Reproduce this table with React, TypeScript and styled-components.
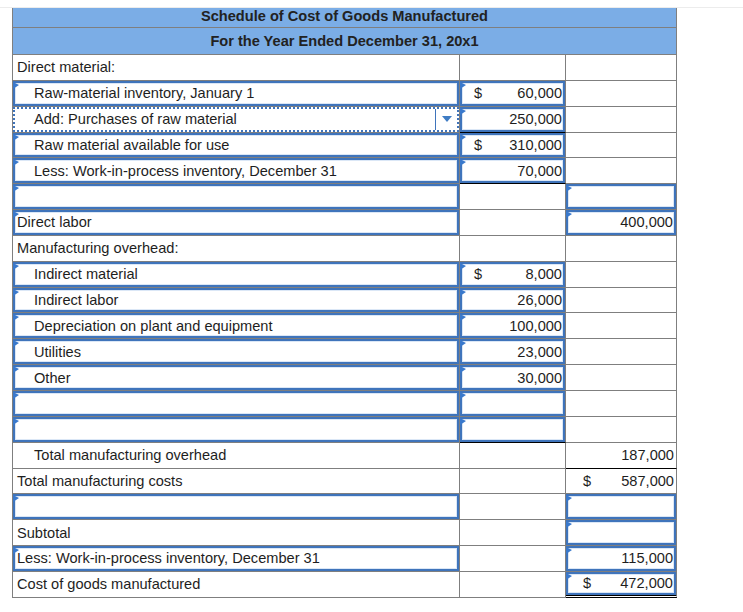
import React from "react";
import styled, { createGlobalStyle, css } from "styled-components";

const GRAY = "#7f7f7f";
const BLUE = "#3f74bb";
const HEADER_BG = "#7badE6";

const GlobalStyle = createGlobalStyle`
  body {
    margin: 0;
    background: #ffffff;
    font-family: "Liberation Sans", Arial, sans-serif;
    color: #1e1e1e;
  }
`;

const Page = styled.div`
  padding-top: 7px;
  width: 743px;
  height: 612px;
  box-sizing: border-box;
`;

const TopRule = styled.div`
  height: 1px;
  background: #ececec;
`;

const Sheet = styled.div`
  display: grid;
  grid-template-columns: 447px 106px 111px;
  grid-template-rows: 20px 27px;
  grid-auto-rows: 25.85px;
  width: max-content;
  margin-left: 12px;
  border-left: 1px solid ${GRAY};
  font-size: 14.6px;
`;

const HeaderCell = styled.div<{ $first?: boolean }>`
  grid-column: 1 / -1;
  background: ${HEADER_BG};
  border-right: 1px solid ${GRAY};
  border-bottom: 1px solid ${GRAY};
  display: flex;
  align-items: center;
  justify-content: center;
  font-weight: bold;
  color: #222;
  padding-bottom: ${(p) => (p.$first ? "4px" : "0")};
`;

type Under = "single" | "double";

const Cell = styled.div<{ $under?: Under }>`
  position: relative;
  display: flex;
  border-right: 1px solid ${GRAY};
  border-bottom: 1px solid ${GRAY};
  ${(p) =>
    p.$under === "single" &&
    css`
      border-bottom-color: #000;
    `}
  ${(p) =>
    p.$under === "double" &&
    css`
      border-bottom: 3px double #000;
    `}
`;

type Kind = "plain" | "input" | "select";

const Field = styled.div<{ $kind: Kind; $pl: number; $pr?: number }>`
  position: relative;
  flex: 1;
  display: flex;
  align-items: center;
  min-width: 0;
  white-space: nowrap;
  padding-left: ${(p) => p.$pl}px;
  padding-right: ${(p) => p.$pr ?? 0}px;
  ${(p) =>
    p.$kind === "input" &&
    css`
      border: 2px solid ${BLUE};
      box-shadow: inset 0 0 0 1px #dbe7f6;
      &::before {
        content: "";
        position: absolute;
        left: -2px;
        top: -1px;
        border-left: 6px solid #3a79cc;
        border-top: 3px solid transparent;
        border-bottom: 4px solid transparent;
      }
    `}
  ${(p) =>
    p.$kind === "select" &&
    css`
      border: 2px dotted ${BLUE};
    `}
`;

const Label = styled.span`
  flex: 1;
`;

const Dollar = styled.span`
  flex: 1;
`;

const Value = styled.span`
  margin-left: auto;
`;

const SelectButton = styled.div`
  align-self: stretch;
  width: 22px;
  border-left: 1px solid ${BLUE};
  display: flex;
  align-items: center;
  justify-content: center;
  margin-right: -1px;
`;

const Caret = styled.span`
  width: 0;
  height: 0;
  border-left: 5px solid transparent;
  border-right: 5px solid transparent;
  border-top: 6px solid #3f7cc4;
`;

type Amt = {
  kind?: Kind;
  dollar?: boolean;
  value?: string;
  under?: Under;
};

type Row = {
  label?: string;
  indent?: boolean;
  kind?: Kind;
  c2?: Amt;
  c3?: Amt;
};

const rows: Row[] = [
  { label: "Direct material:" },
  {
    label: "Raw-material inventory, January 1",
    indent: true,
    kind: "input",
    c2: { kind: "input", dollar: true, value: "60,000" },
  },
  {
    label: "Add: Purchases of raw material",
    indent: true,
    kind: "select",
    c2: { kind: "input", value: "250,000", under: "single" },
  },
  {
    label: "Raw material available for use",
    indent: true,
    kind: "input",
    c2: { kind: "input", dollar: true, value: "310,000" },
  },
  {
    label: "Less: Work-in-process inventory, December 31",
    indent: true,
    kind: "input",
    c2: { kind: "input", value: "70,000", under: "single" },
  },
  { kind: "input", c3: { kind: "input" } },
  { label: "Direct labor", kind: "input", c3: { kind: "input", value: "400,000" } },
  { label: "Manufacturing overhead:" },
  {
    label: "Indirect material",
    indent: true,
    kind: "input",
    c2: { kind: "input", dollar: true, value: "8,000" },
  },
  { label: "Indirect labor", indent: true, kind: "input", c2: { kind: "input", value: "26,000" } },
  {
    label: "Depreciation on plant and equipment",
    indent: true,
    kind: "input",
    c2: { kind: "input", value: "100,000" },
  },
  { label: "Utilities", indent: true, kind: "input", c2: { kind: "input", value: "23,000" } },
  { label: "Other", indent: true, kind: "input", c2: { kind: "input", value: "30,000" } },
  { kind: "input", c2: { kind: "input" } },
  { kind: "input", c2: { kind: "input", under: "single" } },
  {
    label: "Total manufacturing overhead",
    indent: true,
    c3: { value: "187,000", under: "single" },
  },
  { label: "Total manufacturing costs", c3: { dollar: true, value: "587,000" } },
  { kind: "input", c3: { kind: "input" } },
  { label: "Subtotal", c3: { kind: "input" } },
  {
    label: "Less: Work-in-process inventory, December 31",
    kind: "input",
    c3: { kind: "input", value: "115,000" },
  },
  {
    label: "Cost of goods manufactured",
    c3: { kind: "input", dollar: true, value: "472,000", under: "double" },
  },
];

function LabelCell({ row }: { row: Row }) {
  const kind = row.kind ?? "plain";
  const boxed = kind !== "plain";
  const pl = (row.indent ? 21 : 4) - (boxed ? 2 : 0);
  return (
    <Cell>
      <Field $kind={kind} $pl={pl}>
        <Label>{row.label}</Label>
        {kind === "select" && (
          <SelectButton>
            <Caret />
          </SelectButton>
        )}
      </Field>
    </Cell>
  );
}

function AmountCell({ amt, left }: { amt?: Amt; left: number }) {
  const kind = amt?.kind ?? "plain";
  const boxed = kind !== "plain";
  return (
    <Cell $under={amt?.under}>
      <Field $kind={kind} $pl={left - (boxed ? 2 : 0)} $pr={boxed ? 1 : 2}>
        {amt?.dollar && <Dollar>$</Dollar>}
        {amt?.value && <Value>{amt.value}</Value>}
      </Field>
    </Cell>
  );
}

export default function App() {
  return (
    <Page>
      <GlobalStyle />
      <TopRule />
      <Sheet>
        <HeaderCell $first>Schedule of Cost of Goods Manufactured</HeaderCell>
        <HeaderCell>For the Year Ended December 31, 20x1</HeaderCell>
        {rows.map((row, i) => (
          <React.Fragment key={i}>
            <LabelCell row={row} />
            <AmountCell amt={row.c2} left={14} />
            <AmountCell amt={row.c3} left={17} />
          </React.Fragment>
        ))}
      </Sheet>
    </Page>
  );
}
